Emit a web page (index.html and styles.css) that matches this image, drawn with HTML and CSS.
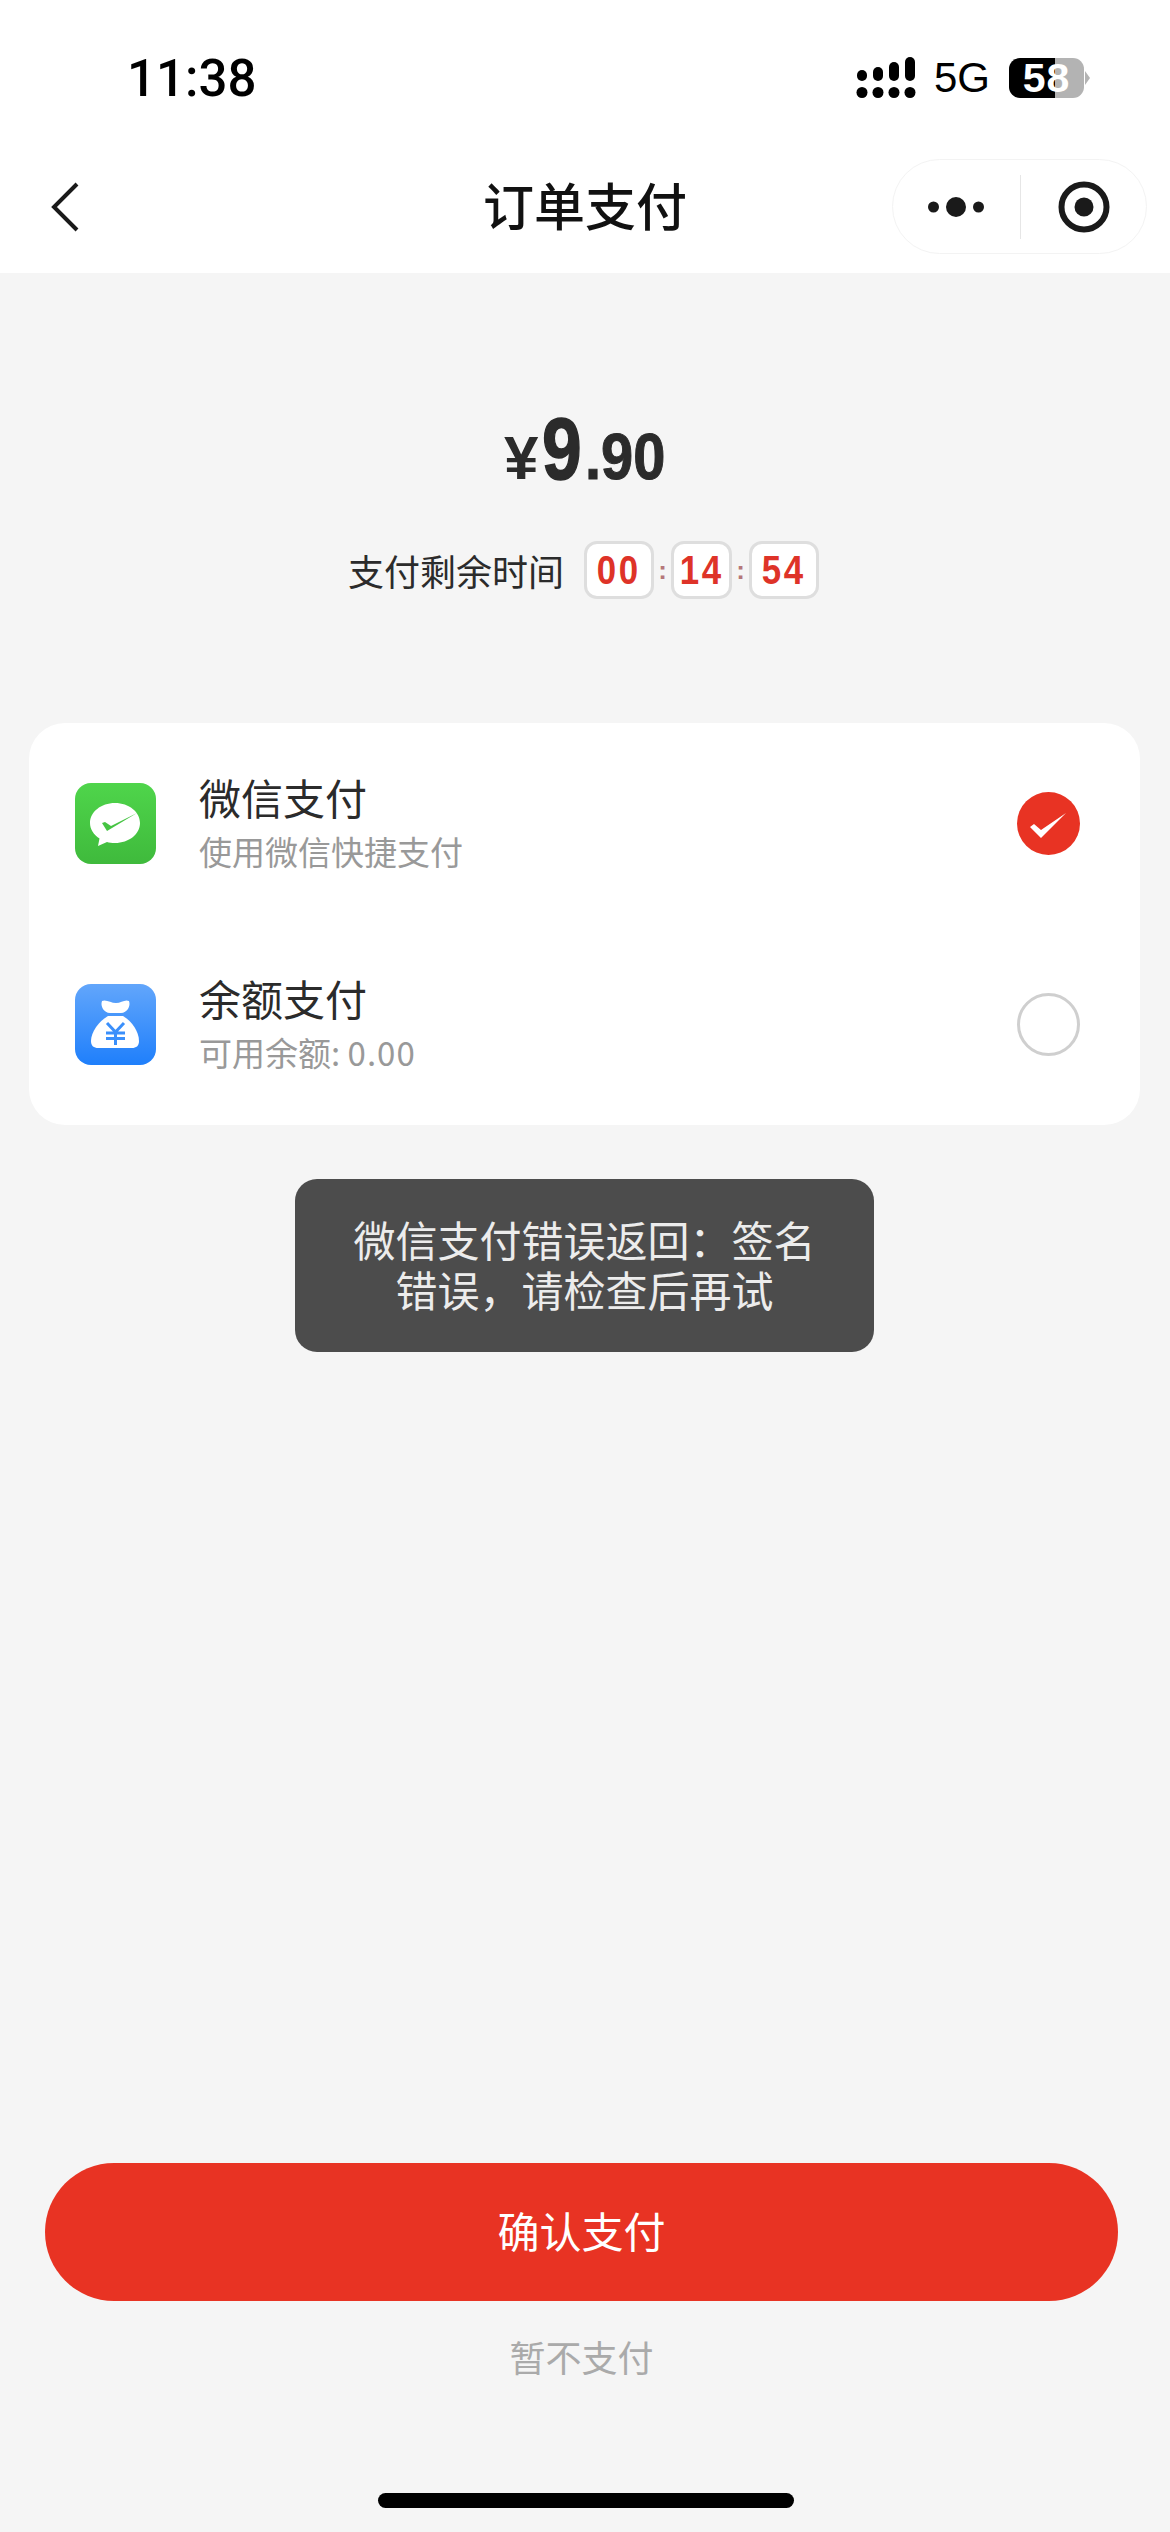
FILE: index.html
```html
<!DOCTYPE html>
<html lang="zh-CN">
<head>
  <meta charset="UTF-8">
  <title>订单支付</title>
  <link rel="stylesheet" href="styles.css">
</head>
<body>
  <div class="page">
    <header class="top">
      <div class="status">
        <span class="time">11:38</span>
        <div class="status-right">
          <svg class="signal" width="60" height="42" viewBox="0 0 60 42" fill="#000">
            <rect x="1" y="13" width="10" height="11" rx="5"/>
            <rect x="17" y="10" width="10" height="14" rx="5"/>
            <rect x="33" y="5" width="10" height="19" rx="5"/>
            <rect x="49" y="0" width="10" height="24" rx="5"/>
            <circle cx="6" cy="35.5" r="5.5"/>
            <circle cx="22" cy="35.5" r="5.5"/>
            <circle cx="38" cy="35.5" r="5.5"/>
            <circle cx="54" cy="35.5" r="5.5"/>
          </svg>
          <span class="net">5G</span>
          <span class="battery">58</span>
          <span class="battery-nub"></span>
        </div>
      </div>
      <nav class="nav">
        <svg class="back" width="28" height="50" viewBox="0 0 28 50" fill="none" stroke="#1a1a1a" stroke-width="4">
          <path d="M26 2 L3 25 L26 48"/>
        </svg>
        <h1 class="title">订单支付</h1>
        <div class="capsule">
          <div class="capsule-btn">
            <svg width="56" height="20" viewBox="0 0 56 20" fill="#1a1a1a">
              <circle cx="5.500" cy="10" r="5.500"/>
              <circle cx="28" cy="10" r="10"/>
              <circle cx="50.500" cy="10" r="5.500"/>
            </svg>
          </div>
          <div class="capsule-btn capsule-target">
            <svg width="52" height="52" viewBox="0 0 52 52">
              <circle cx="26" cy="26" r="22.5" fill="none" stroke="#1a1a1a" stroke-width="6"/>
              <circle cx="26" cy="26" r="9.5" fill="#1a1a1a"/>
            </svg>
          </div>
        </div>
      </nav>
    </header>

    <main class="main">
      <div class="amount">
        <span class="yen">¥</span><span class="int">9</span><span class="dec">.90</span>
      </div>

      <div class="countdown">
        <span class="countdown-label">支付剩余时间</span>
        <span class="cell cell-wide"><span class="digits">00</span></span>
        <span class="sep">:</span>
        <span class="cell"><span class="digits">14</span></span>
        <span class="sep">:</span>
        <span class="cell cell-wide"><span class="digits">54</span></span>
      </div>

      <section class="card">
        <div class="row">
          <div class="pay-icon icon-wechat">
            <svg width="81" height="81" viewBox="0 0 81 81">
              <path d="M40 20 C54 20 65 29 65 40 C65 51 54 60 40 60 C37 60 34 59.600 32 59 L23 63 L24.500 55.500 C18.500 51.500 15 46 15 40 C15 29 26 20 40 20 Z" fill="#fff"/>
              <path d="M27 40 L30 39 L36 43 L62 30 L32 48 Z" fill="#46c443"/>
            </svg>
          </div>
          <div class="row-text">
            <div class="row-title">微信支付</div>
            <div class="row-sub">使用微信快捷支付</div>
          </div>
          <svg class="radio" width="63" height="63" viewBox="0 0 63 63">
            <circle cx="31.500" cy="31.500" r="31.500" fill="#e83323"/>
            <path d="M13 35 L17 32 L24 38 L49 21 L24 46 Z" fill="#fff"/>
          </svg>
        </div>
        <div class="row">
          <div class="pay-icon icon-balance">
            <svg width="81" height="81" viewBox="0 0 81 81">
              <path d="M27 17 C31 15 36 19 41 19 C46 19 50 15 54 17 C56 22 52 29 46 29 L35 29 C29 29 25 22 27 17 Z" fill="#fff"/>
              <path d="M33 32 L48 32 C57 37 64 48 64 57 C64 62 61 64 57 64 L23 64 C19 64 16 62 16 57 C16 48 24 37 33 32 Z" fill="#fff"/>
              <path d="M32 39 L40.500 48 L49 39 M31 49 L50 49 M31 54.500 L50 54.500 M40.500 48 L40.500 61" fill="none" stroke="#3a8ffb" stroke-width="3"/>
            </svg>
          </div>
          <div class="row-text">
            <div class="row-title">余额支付</div>
            <div class="row-sub">可用余额: <span class="balance">0.00</span></div>
          </div>
          <span class="radio radio-off"></span>
        </div>
      </section>

      <div class="toast">微信支付错误返回：签名<br>错误，请检查后再试</div>

      <footer class="footer">
        <button class="confirm">确认支付</button>
        <div class="later">暂不支付</div>
        <div class="home-bar"></div>
      </footer>
    </main>
  </div>
</body>
</html>
```

FILE: styles.css
```css
* {
  box-sizing: border-box;
}

body {
  margin: 0;
  background: #f5f5f5;
  color: #2b2b2b;
  font-family: "Noto Sans CJK SC", "Liberation Sans", sans-serif;
}

.page {
  width: 1170px;
  height: 2532px;
  display: flex;
  flex-direction: column;
  overflow: hidden;
}

/* status bar + title bar */
.top {
  height: 273px;
  background: #fff;
}

.status {
  height: 156px;
  display: flex;
  align-items: center;
  justify-content: space-between;
  padding: 0 86px 0 127px;
}

.time {
  font-family: Roboto, "Liberation Sans", sans-serif;
  font-weight: 500;
  font-size: 51px;
  color: #000;
}

.status-right {
  display: flex;
  align-items: center;
}

.signal {
  margin-right: 18px;
}

.net {
  font-family: "Liberation Sans", sans-serif;
  font-size: 42px;
  color: #000;
  margin-right: 19px;
}

.battery {
  width: 75px;
  height: 40px;
  border-radius: 11px;
  background: linear-gradient(to right, #000 46px, #b3b3b3 46px);
  color: #fff;
  font-family: "Liberation Sans", sans-serif;
  font-weight: 700;
  font-size: 41px;
  line-height: 40px;
  text-align: center;
  letter-spacing: 1px;
}

.battery-nub {
  width: 0;
  height: 0;
  margin-left: 1px;
  margin-right: -6px;
  border-left: 5px solid #b3b3b3;
  border-top: 7px solid transparent;
  border-bottom: 7px solid transparent;
}

.nav {
  height: 117px;
  display: grid;
  grid-template-columns: 1fr auto 1fr;
  align-items: center;
  padding-bottom: 16px;
}

.back {
  margin-left: 51px;
}

.title {
  margin: 0 0 5px;
  font-size: 51px;
  font-weight: 500;
  line-height: 60px;
  color: #111;
}

.capsule {
  justify-self: end;
  margin-right: 23px;
  width: 255px;
  height: 95px;
  display: flex;
  align-items: center;
  border: 1px solid #f3f3f3;
  border-radius: 48px;
}

.capsule-btn {
  width: 127px;
  height: 64px;
  display: flex;
  align-items: center;
  justify-content: center;
}

.capsule-target {
  border-left: 1px solid #e6e6e6;
  padding-left: 2px;
}

/* main column */
.main {
  flex: 1;
  display: flex;
  flex-direction: column;
}

/* no condensed face here, so the digits are squeezed */
.amount {
  margin-top: 134px;
  height: 84px;
  display: flex;
  align-items: baseline;
  padding-left: 504px;
  color: #2b2b2b;
  font-family: "Liberation Sans", sans-serif;
  font-weight: 700;
  line-height: 84px;
}

.yen {
  width: 38px;
  font-size: 62px;
}

.int {
  display: inline-block;
  width: 43px;
  font-size: 87px;
  -webkit-text-stroke: 1.5px #2b2b2b;
  transform: scaleX(.82);
  transform-origin: left;
}

.dec {
  display: inline-block;
  font-size: 65px;
  -webkit-text-stroke: 1px #2b2b2b;
  transform: scaleX(.89);
  transform-origin: left;
}

.countdown {
  margin-top: 50px;
  height: 58px;
  display: flex;
  align-items: center;
  padding-left: 348px;
}

.countdown-label {
  font-size: 36px;
  margin-right: 20px;
  color: #2b2b2b;
}

.cell {
  width: 61px;
  height: 58px;
  display: flex;
  align-items: center;
  justify-content: center;
  background: #fff;
  border: 3px solid #dedede;
  border-radius: 13px;
}

.cell-wide {
  width: 70px;
}

.digits {
  display: inline-block;
  color: #de3328;
  font-family: "Liberation Sans", sans-serif;
  font-weight: 700;
  font-size: 41px;
  letter-spacing: 3px;
  transform: scaleX(.85);
}

.sep {
  width: 17px;
  text-align: center;
  font-family: "Liberation Sans", sans-serif;
  font-weight: 700;
  font-size: 26px;
  color: #b5777a;
}

.card {
  margin: 124px 0 0 29px;
  width: 1111px;
  background: #fff;
  border-radius: 36px;
}

.row {
  height: 201px;
  display: flex;
  align-items: center;
  padding: 0 60px 0 46px;
}

.pay-icon {
  width: 81px;
  height: 81px;
  border-radius: 16px;
  flex: none;
}

.pay-icon svg {
  display: block;
}

.icon-wechat {
  background: linear-gradient(#4fd54b, #3fba3c);
}

.icon-balance {
  background: linear-gradient(#62a6fb, #1f7ffb);
}

.row-text {
  flex: 1;
  margin-left: 43px;
}

.row-title {
  font-size: 42px;
  line-height: 54px;
  color: #2b2b2b;
}

.row-sub {
  font-size: 33px;
  line-height: 54px;
  color: #999;
}

.balance {
  letter-spacing: 1px;
}

.radio {
  flex: none;
  display: block;
}

.radio-off {
  width: 63px;
  height: 63px;
  border: 3px solid #cfcfcf;
  border-radius: 50%;
}

.toast {
  margin: 54px 0 0 295px;
  width: 579px;
  height: 173px;
  padding-top: 39px;
  background: #4c4c4c;
  border-radius: 22px;
  color: #ececec;
  font-family: "Liberation Sans", "Noto Sans CJK SC", sans-serif;
  font-size: 42px;
  line-height: 50px;
  text-align: center;
  white-space: nowrap;
}

.footer {
  margin-top: auto;
  padding: 0 52px 24px 45px;
  display: flex;
  flex-direction: column;
  align-items: center;
}

.confirm {
  width: 100%;
  height: 138px;
  padding-bottom: 6px;
  border: 0;
  border-radius: 69px;
  background: #e83323;
  color: #fff;
  font-family: inherit;
  font-size: 42px;
}

.later {
  margin-top: 31px;
  font-size: 36px;
  line-height: 48px;
  color: #aaa;
}

.home-bar {
  margin: 113px 0 0 8px;
  width: 416px;
  height: 15px;
  border-radius: 8px;
  background: #000;
}
```
